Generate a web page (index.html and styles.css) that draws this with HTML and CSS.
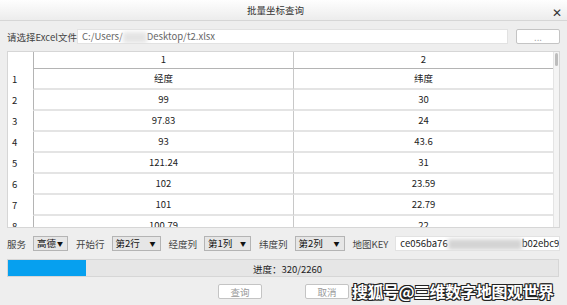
FILE: index.html
```html
<!DOCTYPE html>
<html lang="zh-CN">
  <head>
    <meta charset="UTF-8" />
    <title>批量坐标查询</title>
    <link rel="stylesheet" href="styles.css">
  </head>
  <body>
    <div class="window">
      <div class="titlebar">
        <span class="title">批量坐标查询</span>
        <span class="close">✕</span>
      </div>

      <div class="content">
        <!-- file chooser -->
        <div class="file-row">
          <span class="label">请选择Excel文件</span>
          <div class="input">C:/Users/<span class="blur blur-user"></span>Desktop/t2.xlsx</div>
          <button class="btn browse">...</button>
        </div>

        <!-- data table -->
        <div class="table">
          <div class="grid">
            <div class="corner"></div>
            <div class="head">1</div>
            <div class="head">2</div>

            <div class="rowhead">1</div><div class="cell">经度</div><div class="cell">纬度</div>
            <div class="rowhead">2</div><div class="cell">99</div><div class="cell">30</div>
            <div class="rowhead">3</div><div class="cell">97.83</div><div class="cell">24</div>
            <div class="rowhead">4</div><div class="cell">93</div><div class="cell">43.6</div>
            <div class="rowhead">5</div><div class="cell">121.24</div><div class="cell">31</div>
            <div class="rowhead">6</div><div class="cell">102</div><div class="cell">23.59</div>
            <div class="rowhead">7</div><div class="cell">101</div><div class="cell">22.79</div>
            <div class="rowhead">8</div><div class="cell">100.79</div><div class="cell">22</div>
          </div>
          <div class="scrollbar"><div class="thumb"></div></div>
        </div>

        <!-- options -->
        <div class="options">
          <span class="label">服务</span>
          <div class="combo w-service">高德<span class="arrow">▼</span></div>
          <span class="label">开始行</span>
          <div class="combo w-row">第2行<span class="arrow">▼</span></div>
          <span class="label">经度列</span>
          <div class="combo w-col">第1列<span class="arrow">▼</span></div>
          <span class="label">纬度列</span>
          <div class="combo w-col2">第2列<span class="arrow">▼</span></div>
          <span class="label">地图KEY</span>
          <div class="input key">ce056ba76<span class="blur blur-key"></span>b02ebc9</div>
        </div>

        <div class="progress">
          <div class="bar" style="width: 14.2%"></div>
          <span class="progress-text">进度：320/2260</span>
        </div>

        <div class="actions">
          <button class="btn action">查询</button>
          <button class="btn action">取消</button>
        </div>
      </div>

      <div class="watermark">搜狐号@三维数字地图观世界</div>
    </div>
  </body>
</html>
```

FILE: styles.css
```css
* {
  margin: 0;
  padding: 0;
  box-sizing: border-box;
}

body {
  background: #eeeeee;
  font-family: "Noto Sans CJK SC", "Noto Sans", sans-serif;
  font-size: 9.5px;
  color: #222;
}

.window {
  position: relative;
  width: 567px;
  height: 305px;
  overflow: hidden;
}

.titlebar {
  height: 21px;
  background: linear-gradient(#fefefe, #ececec);
  border-bottom: 1px solid #d6d6d6;
  display: flex;
  align-items: center;
  justify-content: center;
  position: relative;
}
.title {
  font-size: 9.5px;
  color: #333;
  margin-left: -16px;
}
.close {
  position: absolute;
  right: 5px;
  top: 3px;
  font-size: 12px;
  color: #333;
}

.content {
  padding: 0 7px;
}

.label {
  color: #444;
  white-space: nowrap;
  flex-shrink: 0;
}

.input {
  background: #fff;
  border: 1px solid #e2e2e2;
  height: 15px;
  line-height: 13px;
  padding-left: 4px;
  color: #666;
  white-space: nowrap;
  overflow: hidden;
  min-width: 0;
}

.blur {
  display: inline-block;
  height: 11px;
  vertical-align: middle;
  background: #e4e4e4;
  filter: blur(2px);
}
.blur-user {
  width: 24px;
}
.blur-key {
  width: 74px;
  background: #d4d4d4;
}

.btn {
  font-family: inherit;
  font-size: 9.5px;
  background: #fff;
  border: 1px solid #c4c4c4;
  border-radius: 2px;
  height: 15px;
  color: #999;
  flex-shrink: 0;
}

.file-row {
  display: flex;
  align-items: center;
  margin-top: 8px;
  height: 15px;
}
.file-row .label {
  width: 70px;
}
.file-row .input {
  flex: 1;
}
.browse {
  width: 44px;
  margin-left: 8px;
  line-height: 8px;
}

/* table */
.table {
  margin-top: 7px;
  height: 177px;
  display: flex;
  background: #fff;
  border: 1px solid #d6d6d6;
  overflow: hidden;
}
.grid {
  display: grid;
  grid-template-columns: 25px 260px 260px;
  grid-template-rows: 17px repeat(8, 21px);
}
.corner {
  background: #fff;
}
.head {
  border-left: 1px solid #b4b4b4;
  border-bottom: 1px solid #b4b4b4;
  text-align: center;
  line-height: 15px;
  color: #222;
}
.head + .head {
  border-left: 1px solid #c8c8c8;
}
.rowhead {
  padding-left: 4px;
  line-height: 21px;
  color: #222;
}
.cell {
  border-left: 1px solid #b4b4b4;
  border-bottom: 2px solid #e4e4e4;
  text-align: center;
  line-height: 19px;
  color: #222;
}
.cell:nth-child(3n) {
  border-left: 1px solid #c8c8c8;
}
.scrollbar {
  width: 7px;
  border-left: 1px solid #e4e4e4;
  background: #f4f4f4;
}
.thumb {
  margin: 1px 1px 0 1px;
  height: 13px;
  background: #bdbdbd;
  border-radius: 2px;
}

/* options row */
.options {
  display: flex;
  align-items: center;
  margin-top: 8px;
  height: 15px;
}
.combo {
  position: relative;
  flex-shrink: 0;
  height: 15px;
  line-height: 13px;
  padding-left: 3px;
  background: #e6e6e6;
  border: 1px solid #b4b4b4;
  color: #111;
  margin-left: 7px;
  margin-right: 8px;
}
.arrow {
  position: absolute;
  right: 4px;
  top: 0;
  font-size: 6px;
  color: #111;
}
.w-service {
  width: 35px;
}
.w-row {
  width: 49px;
}
.w-col {
  width: 47px;
}
.w-col2 {
  width: 50px;
}
.options .key {
  flex: 1;
  margin-left: 7px;
  color: #222;
  border-color: #e2e2e2;
}

.progress {
  position: relative;
  margin-top: 8px;
  height: 18px;
  width: 552px;
  background: #e6e6e6;
  border: 1px solid #d6d6d6;
}
.bar {
  height: 100%;
  background: #06a0ef;
}
.progress-text {
  position: absolute;
  left: 245px;
  top: 2px;
  color: #222;
}

.actions {
  display: flex;
  gap: 43px;
  margin-top: 7px;
  padding-left: 211px;
}
.action {
  width: 44px;
}

.watermark {
  position: absolute;
  left: 352px;
  top: 279px;
  font-size: 16px;
  font-weight: bold;
  color: #fff;
  white-space: nowrap;
  letter-spacing: -0.5px;
  text-shadow: 1px 1px 0 #222, -1px -1px 0 #222, 1px -1px 0 #222, -1px 1px 0 #222, 0 1px 0 #222, 0 -1px 0 #222;
}
```
